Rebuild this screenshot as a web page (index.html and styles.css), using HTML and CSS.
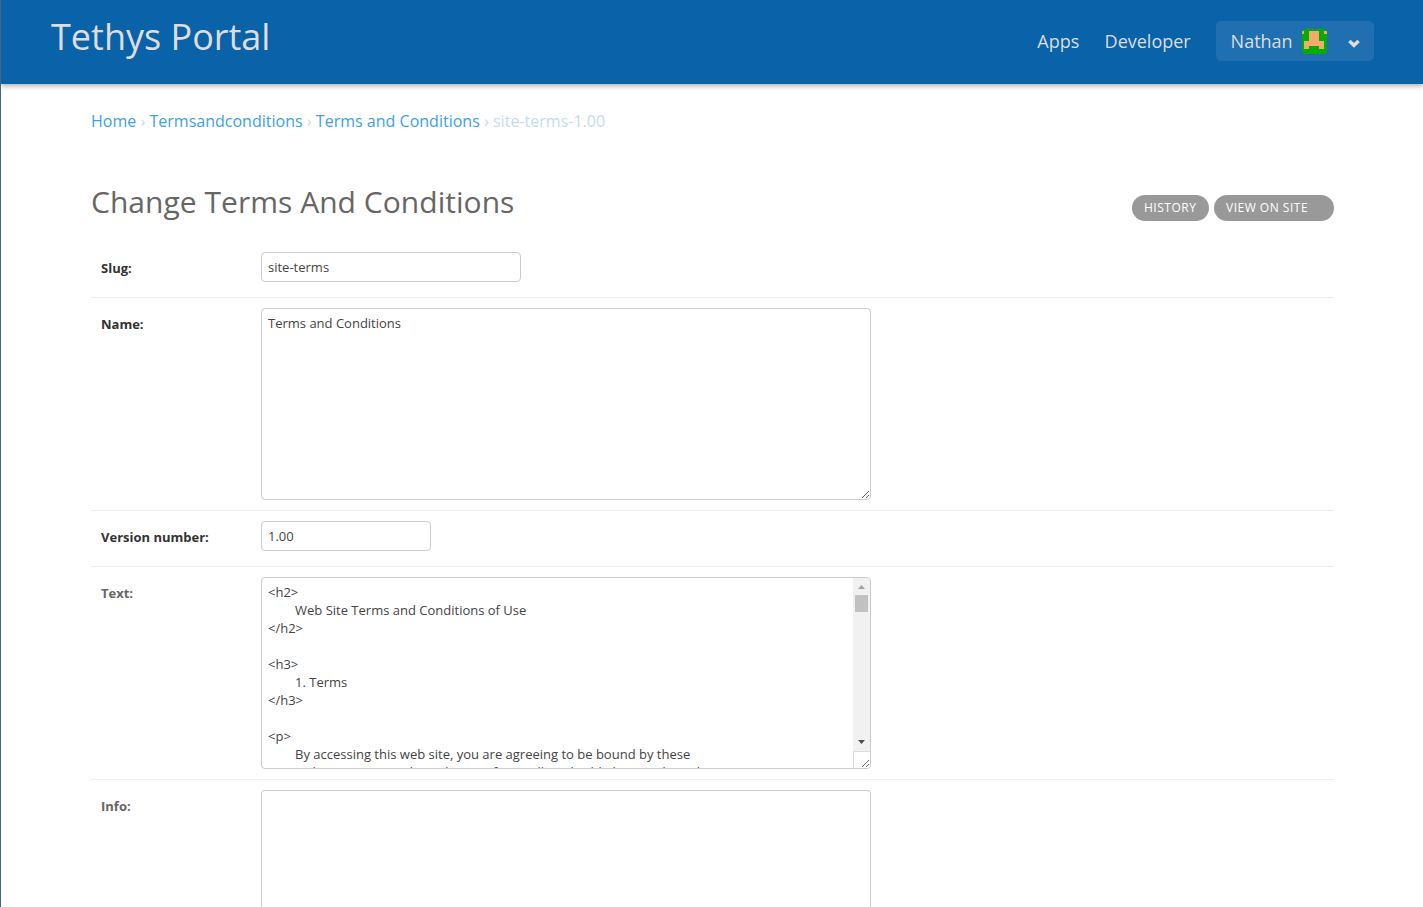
FILE: index.html
```html
<!DOCTYPE html>
<html lang="en">
<head>
<meta charset="utf-8">
<title>Change Terms And Conditions</title>
<link rel="stylesheet" href="styles.css">
</head>
<body>
<header class="header">
  <div class="brand">Tethys Portal</div>
  <nav class="nav">
    <a class="nav-link">Apps</a>
    <a class="nav-link">Developer</a>
    <div class="user">
      <span class="user-name">Nathan</span>
      <svg class="avatar" width="25" height="25" viewBox="0 0 25 25" shape-rendering="crispEdges">
        <rect width="25" height="25" fill="#06ac06"/>
        <path d="M0 2h2v3H0zM22 2h3v3h-3zM7 2h10v10h5v8h-5v-3H7v3H2v-8h5z" fill="#f3ab6c"/>
      </svg>
      <svg class="chevron" width="12" height="9" viewBox="0 0 12 9"><path d="M1.4 1.9 6 6.3 10.6 1.9" fill="none" stroke="#ddd" stroke-width="3.4"/></svg>
    </div>
  </nav>
</header>
<main class="main">
  <div class="crumbs"><a>Home</a> › <a>Termsandconditions</a> › <a>Terms and Conditions</a> › site-terms-1.00</div>
  <div class="title-row">
    <h1 class="title">Change Terms And Conditions</h1>
    <div class="tools"><a class="pill">HISTORY</a><a class="pill pill-wide">VIEW ON SITE</a></div>
  </div>
  <form>
    <div class="row"><label class="label required">Slug:</label><div class="field slug">site-terms</div></div>
    <div class="row row-area"><label class="label required">Name:</label><div class="field area"><div class="content">Terms and Conditions</div>
      <svg class="grip" width="9" height="9" viewBox="0 0 9 9"><path d="M1 8 8 1M5 8 8 5" stroke="#666"/></svg></div></div>
    <div class="row"><label class="label required">Version number:</label><div class="field version">1.00</div></div>
    <div class="row row-area"><label class="label">Text:</label><div class="field area"><div class="content">&lt;h2&gt;
	Web Site Terms and Conditions of Use
&lt;/h2&gt;

&lt;h3&gt;
	1. Terms
&lt;/h3&gt;

&lt;p&gt;
	By accessing this web site, you are agreeing to be bound by these
	web site Terms and Conditions of Use, all applicable laws and regulations,</div>
      <div class="scroll">
        <div class="track">
          <svg width="7" height="4" viewBox="0 0 7 4"><path d="M3.5 0 7 4H0z" fill="#a3a3a3"/></svg>
          <div class="thumb"></div>
          <svg class="down" width="7" height="4" viewBox="0 0 7 4"><path d="M0 0h7L3.5 4z" fill="#505050"/></svg>
        </div>
        <div class="corner"></div>
      </div>
      <svg class="grip" width="9" height="9" viewBox="0 0 9 9"><path d="M1 8 8 1M5 8 8 5" stroke="#666"/></svg></div></div>
    <div class="row row-area row-last"><label class="label">Info:</label><div class="field area area-last"></div></div>
  </form>
</main>
</body>
</html>
```
FILE: styles.css
```css
* { box-sizing: border-box; }
html { height: 100%; overflow: hidden; }
body {
  margin: 0;
  height: 907px;
  overflow: hidden;
  border-left: 1px solid #45697a;
  background: #fff;
  color: #666;
  font: 13px/18px "Open Sans", "Noto Sans", sans-serif;
}
.header {
  height: 84px;
  padding: 0 49px 0 50px;
  display: flex;
  justify-content: space-between;
  background: #0a62a9;
  color: #ddd;
  box-shadow: 0 2px 5px rgba(0, 0, 0, .32);
}
.brand { padding-top: 12px; font-size: 36px; line-height: 50px; white-space: nowrap; }
.nav { display: flex; padding-top: 21px; font-size: 18px; line-height: 40px; }
.nav-link { margin-right: 25.3px; }
.user {
  width: 158px;
  height: 40px;
  padding-left: 14.6px;
  display: flex;
  border-radius: 5px;
  background: #1f6fb1;
}
.user-name { width: 71.4px; }
.avatar { margin-top: 8px; border-radius: 4px; }
.chevron { margin: 18px 0 0 21px; }
.main { padding: 26px 89px 0 90px; }
.crumbs { height: 22px; font-size: 16px; line-height: 22px; letter-spacing: .013px; color: #c4dce8; white-space: nowrap; }
.crumbs a { color: #3c9fec; }
.title-row { height: 110px; display: flex; justify-content: space-between; }
.title { margin: 50px 0 0; font-size: 30px; font-weight: 400; line-height: 40px; letter-spacing: .03px; white-space: nowrap; }
.tools { display: flex; gap: 5px; padding-top: 63px; }
.pill {
  width: 77px;
  height: 26px;
  padding-left: 12px;
  border-radius: 13px;
  background: #999;
  color: #fff;
  font-size: 12px;
  line-height: 25px;
  letter-spacing: .5px;
  white-space: nowrap;
}
.pill-wide { width: 120px; }
.row { height: 56px; padding: 10px; display: flex; border-bottom: 1px solid #eee; }
.row-area { height: 213px; }
.row-last { height: 127px; padding-bottom: 0; border: 0; }
.label { width: 160px; padding-top: 7px; font-weight: 700; }
.required { color: #333; }
.field {
  position: relative;
  height: 30px;
  padding: 5px 6px;
  border: 1px solid #ccc;
  border-radius: 4px;
  color: #444;
}
.slug { width: 260px; }
.version { width: 170px; }
.area { width: 610px; height: 192px; overflow: hidden; }
.area-last { height: 117px; border-bottom: 0; border-radius: 4px 4px 0 0; }
.content { height: 185px; overflow: hidden; white-space: pre; tab-size: 8; }
.grip { position: absolute; right: 0; bottom: 0; }
.scroll { position: absolute; top: 0; right: 0; bottom: 0; width: 17px; display: flex; flex-direction: column; }
.track { flex: 1; display: flex; flex-direction: column; align-items: center; padding: 7px 0; background: #f1f1f1; }
.thumb { width: 13px; height: 17px; margin-top: 6px; background: #c1c1c1; }
.down { margin-top: auto; }
.corner { height: 17px; border: solid #dcdcdc; border-width: 1px 0 0 1px; background: #fff; }
```
